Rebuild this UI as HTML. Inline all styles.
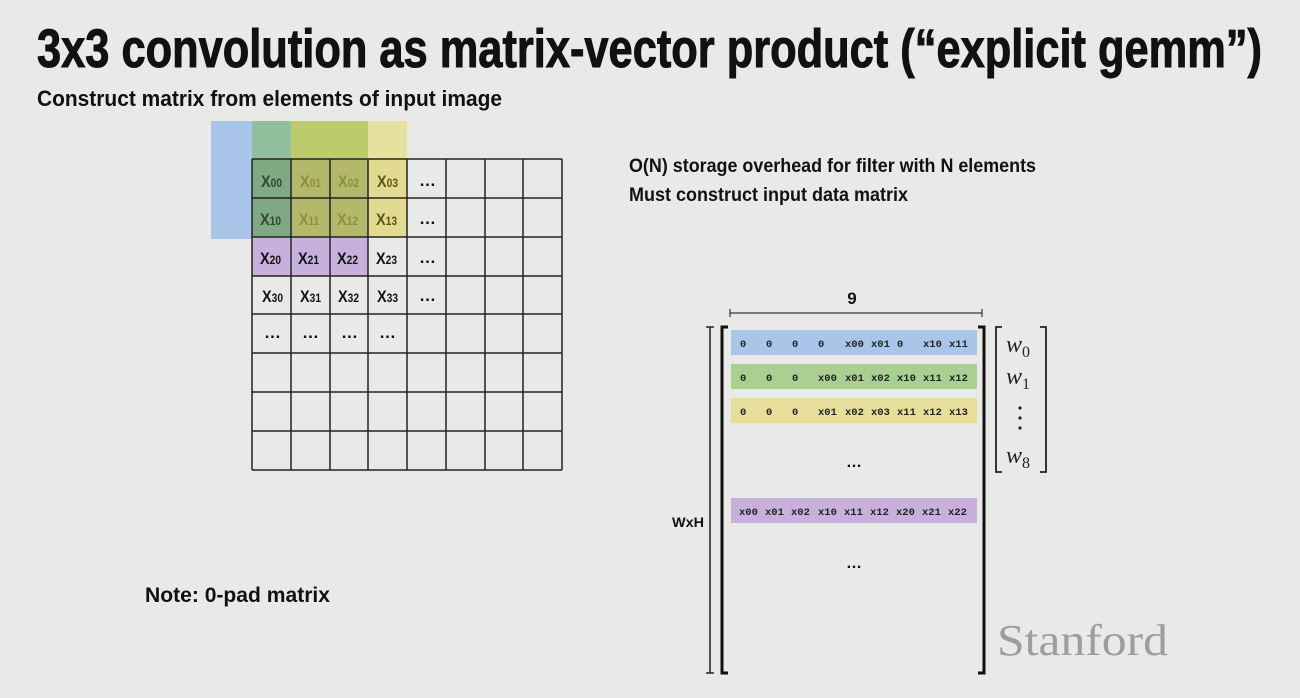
<!DOCTYPE html>
<html><head><meta charset="utf-8"><style>
html,body{margin:0;padding:0;background:#e9eae8;}
svg{display:block}
.b{font-family:"Liberation Sans Narrow","Liberation Sans",sans-serif;font-weight:bold;fill:#111}
.m{font-family:"Liberation Mono","DejaVu Sans Mono",monospace;font-weight:bold;font-size:10.5px;fill:#222}
.w{font-family:"Liberation Serif",serif;font-style:italic;font-size:24px;fill:#222}
</style></head><body>
<svg width="1300" height="698" viewBox="0 0 1300 698" xmlns="http://www.w3.org/2000/svg">
<rect width="1300" height="698" fill="#e9eae8"/>
<text class="b" x="37" y="67" font-size="54" stroke="#111" stroke-width="1" textLength="1225" lengthAdjust="spacingAndGlyphs">3x3 convolution as matrix-vector product (“explicit gemm”)</text>
<text class="b" x="37" y="106" font-size="22" textLength="465" lengthAdjust="spacingAndGlyphs">Construct matrix from elements of input image</text>
<text class="b" x="629" y="172" font-size="19" textLength="407" lengthAdjust="spacingAndGlyphs">O(N) storage overhead for filter with N elements</text>
<text class="b" x="629" y="201" font-size="19" textLength="279" lengthAdjust="spacingAndGlyphs">Must construct input data matrix</text>
<text class="b" x="145" y="602" font-size="21" textLength="185" lengthAdjust="spacingAndGlyphs">Note: 0-pad matrix</text>

<rect x="211" y="121" width="41" height="118" fill="#a9c6e8"/>
<rect x="252" y="121" width="39" height="38" fill="#92c09c"/>
<rect x="252" y="159" width="39" height="78" fill="#7fa983"/>
<rect x="291" y="121" width="77" height="38" fill="#bdcb6c"/>
<rect x="291" y="159" width="77" height="78" fill="#b3b96a"/>
<rect x="368" y="121" width="39" height="38" fill="#e6e29e"/>
<rect x="368" y="159" width="39" height="78" fill="#e3da92"/>
<rect x="252" y="237" width="116" height="39" fill="#c8b0dc"/>

<g stroke="#222" stroke-width="1.5" fill="none">
<path d="M252 159V470M291 159V470M330 159V470M368 159V470M407 159V470M446 159V470M485 159V470M523 159V470M562 159V470"/>
<path d="M252 159H562M252 198H562M252 237H562M252 276H562M252 314H562M252 353H562M252 392H562M252 431H562M252 470H562"/>
</g>
<g class="b" font-size="17">
<text x="261" y="187" fill="#2d4a2d" textLength="21" lengthAdjust="spacingAndGlyphs">X<tspan font-size="12">00</tspan></text>
<text x="300" y="187" fill="#8c8f3a" textLength="21" lengthAdjust="spacingAndGlyphs">X<tspan font-size="12">01</tspan></text>
<text x="338" y="187" fill="#8c8f3a" textLength="21" lengthAdjust="spacingAndGlyphs">X<tspan font-size="12">02</tspan></text>
<text x="377" y="187" fill="#5a5518" textLength="21" lengthAdjust="spacingAndGlyphs">X<tspan font-size="12">03</tspan></text>
<text x="260" y="225" fill="#2d4a2d" textLength="21" lengthAdjust="spacingAndGlyphs">X<tspan font-size="12">10</tspan></text>
<text x="299" y="225" fill="#8c8f3a" textLength="20" lengthAdjust="spacingAndGlyphs">X<tspan font-size="12">11</tspan></text>
<text x="337" y="225" fill="#8c8f3a" textLength="21" lengthAdjust="spacingAndGlyphs">X<tspan font-size="12">12</tspan></text>
<text x="376" y="225" fill="#5a5518" textLength="21" lengthAdjust="spacingAndGlyphs">X<tspan font-size="12">13</tspan></text>
<text x="260" y="264" textLength="21" lengthAdjust="spacingAndGlyphs">X<tspan font-size="12">20</tspan></text>
<text x="298" y="264" textLength="21" lengthAdjust="spacingAndGlyphs">X<tspan font-size="12">21</tspan></text>
<text x="337" y="264" textLength="21" lengthAdjust="spacingAndGlyphs">X<tspan font-size="12">22</tspan></text>
<text x="376" y="264" textLength="21" lengthAdjust="spacingAndGlyphs">X<tspan font-size="12">23</tspan></text>
<text x="262" y="302" textLength="21" lengthAdjust="spacingAndGlyphs">X<tspan font-size="12">30</tspan></text>
<text x="300" y="302" textLength="21" lengthAdjust="spacingAndGlyphs">X<tspan font-size="12">31</tspan></text>
<text x="338" y="302" textLength="21" lengthAdjust="spacingAndGlyphs">X<tspan font-size="12">32</tspan></text>
<text x="377" y="302" textLength="21" lengthAdjust="spacingAndGlyphs">X<tspan font-size="12">33</tspan></text>
<text x="419" y="186">…</text><text x="419" y="224">…</text><text x="419" y="263">…</text><text x="419" y="301">…</text>
<text x="264" y="338">…</text><text x="302" y="338">…</text><text x="341" y="338">…</text><text x="379" y="338">…</text>
</g>

<text class="b" x="852" y="304" font-size="17" text-anchor="middle">9</text>
<path d="M730 313H982M730 309V317M982 309V317" stroke="#333" stroke-width="1.2"/>
<path d="M710 327V673M706 327H714M706 673H714" stroke="#222" stroke-width="1.5" fill="none"/>
<path d="M728 327H722V673H728" stroke="#111" stroke-width="3" fill="none"/>
<path d="M978 327H984V673H978" stroke="#111" stroke-width="3" fill="none"/>
<text class="b" x="672" y="527" font-size="14" textLength="32" lengthAdjust="spacingAndGlyphs">WxH</text>

<rect x="731" y="330" width="246" height="25" fill="#a9c6e8"/>
<rect x="731" y="364" width="246" height="25" fill="#a9cf93"/>
<rect x="731" y="398" width="246" height="25" fill="#e6de9a"/>
<rect x="731" y="498" width="246" height="25" fill="#c8b0dc"/>
<g class="m">
<text y="347"><tspan x="740">0</tspan><tspan x="766">0</tspan><tspan x="792">0</tspan><tspan x="818">0</tspan><tspan x="845">x00</tspan><tspan x="871">x01</tspan><tspan x="897">0</tspan><tspan x="923">x10</tspan><tspan x="949">x11</tspan></text>
<text y="381"><tspan x="740">0</tspan><tspan x="766">0</tspan><tspan x="792">0</tspan><tspan x="818">x00</tspan><tspan x="845">x01</tspan><tspan x="871">x02</tspan><tspan x="897">x10</tspan><tspan x="923">x11</tspan><tspan x="949">x12</tspan></text>
<text y="415"><tspan x="740">0</tspan><tspan x="766">0</tspan><tspan x="792">0</tspan><tspan x="818">x01</tspan><tspan x="845">x02</tspan><tspan x="871">x03</tspan><tspan x="897">x11</tspan><tspan x="923">x12</tspan><tspan x="949">x13</tspan></text>
<text y="515"><tspan x="739">x00</tspan><tspan x="765">x01</tspan><tspan x="791">x02</tspan><tspan x="818">x10</tspan><tspan x="844">x11</tspan><tspan x="870">x12</tspan><tspan x="896">x20</tspan><tspan x="922">x21</tspan><tspan x="948">x22</tspan></text>
</g>
<text class="b" x="854" y="467" font-size="16" text-anchor="middle">…</text>
<text class="b" x="854" y="568" font-size="16" text-anchor="middle">…</text>

<path d="M1002 327H996V472H1002" stroke="#222" stroke-width="1.8" fill="none"/>
<path d="M1040 327H1046V472H1040" stroke="#222" stroke-width="1.8" fill="none"/>
<text class="w" x="1006" y="352">w<tspan font-style="normal" font-size="16" dy="5">0</tspan></text>
<text class="w" x="1006" y="384">w<tspan font-style="normal" font-size="16" dy="5">1</tspan></text>
<circle cx="1020" cy="408" r="1.6" fill="#222"/><circle cx="1020" cy="418" r="1.6" fill="#222"/><circle cx="1020" cy="428" r="1.6" fill="#222"/>
<text class="w" x="1006" y="463">w<tspan font-style="normal" font-size="16" dy="5">8</tspan></text>

<text x="997" y="655" font-family="Liberation Serif,serif" font-size="44" fill="#9d9d9d" textLength="171" lengthAdjust="spacingAndGlyphs">Stanford</text>
</svg>
</body></html>
